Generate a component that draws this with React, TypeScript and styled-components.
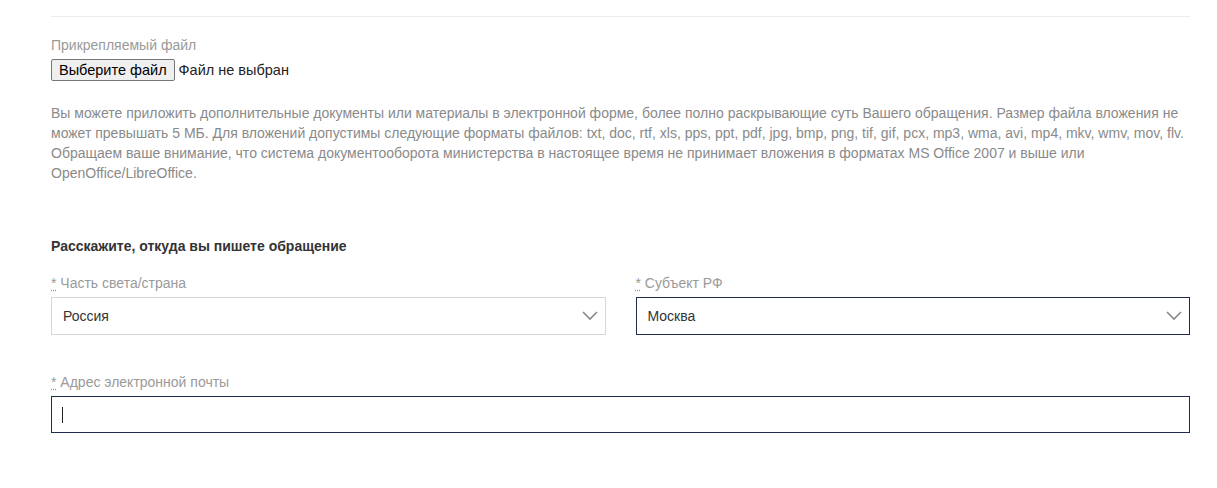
import styled, { createGlobalStyle } from 'styled-components';

const Global = createGlobalStyle`
  body { margin: 0; background: #fff; font-family: Arial, "Liberation Sans", sans-serif; }
`;

const Page = styled.div`
  padding: 0 27px 0 51px;
`;

const Rule = styled.div`
  border-top: 1px solid #ececec;
  margin-top: 16px;
`;

const Label = styled.div`
  color: #9a9a9a;
  font-size: 14px;
  line-height: 16px;
  margin-bottom: 6px;
  abbr { text-decoration: underline dotted; text-underline-offset: 2px; }
`;

const FileRow = styled.div`
  display: flex;
  align-items: center;
  gap: 4px;
  font-size: 14.5px;
  color: #222;
`;

const FileButton = styled.button`
  font-family: inherit;
  font-size: 14.5px;
  color: #000;
  background: #efefef;
  border: 1px solid #767676;
  border-radius: 2px;
  height: 22px;
  padding: 0 7px;
`;

const Hint = styled.p`
  margin: 22px 0 0;
  color: #8a8a8a;
  font-size: 14px;
  line-height: 20px;
`;

const Heading = styled.h3`
  margin: 55px 0 21px;
  font-size: 14px;
  font-weight: bold;
  color: #333;
`;

const Grid = styled.div`
  display: grid;
  grid-template-columns: 1fr 1fr;
  column-gap: 30px;
`;

const Field = styled.div<{ $mb?: number }>`
  margin-bottom: ${p => p.$mb ?? 0}px;
`;

const SelectBox = styled.div<{ $focus?: boolean }>`
  height: 38px;
  box-sizing: border-box;
  border: 1px solid ${p => (p.$focus ? '#1f2d4d' : '#d6d6d6')};
  display: flex;
  align-items: center;
  justify-content: space-between;
  padding: 0 4px 0 11px;
  font-size: 14px;
  color: #333;
`;

const Input = styled.div`
  height: 37px;
  box-sizing: border-box;
  border: 1px solid #1f2d4d;
  display: flex;
  align-items: center;
  padding-left: 10px;
`;

const Caret = styled.span`
  width: 1px;
  height: 16px;
  background: #222;
`;

const Chevron = () => (
  <svg width="22" height="22" viewBox="0 0 22 22" fill="none">
    <path d="M4 7l7 7 7-7" stroke="#8a8a8a" strokeWidth="1.6" />
  </svg>
);

const Req = ({ text }: { text: string }) => (
  <Label><abbr>*</abbr> {text}</Label>
);

export default function App() {
  return (
    <>
      <Global />
      <Page>
        <Rule />
        <div style={{ height: 20 }} />
        <Label>Прикрепляемый файл</Label>
        <FileRow>
          <FileButton>Выберите файл</FileButton>
          <span>Файл не выбран</span>
        </FileRow>
        <Hint>
          Вы можете приложить дополнительные документы или материалы в электронной форме, более полно раскрывающие суть Вашего обращения. Размер файла вложения не может превышать 5 МБ. Для вложений допустимы следующие форматы файлов: txt, doc, rtf, xls, pps, ppt, pdf, jpg, bmp, png, tif, gif, pcx, mp3, wma, avi, mp4, mkv, wmv, mov, flv. Обращаем ваше внимание, что система документооборота министерства в настоящее время не принимает вложения в форматах MS Office 2007 и выше или OpenOffice/LibreOffice.
        </Hint>
        <Heading>Расскажите, откуда вы пишете обращение</Heading>
        <Grid>
          <Field $mb={39}>
            <Req text="Часть света/страна" />
            <SelectBox>Россия<Chevron /></SelectBox>
          </Field>
          <Field $mb={39}>
            <Req text="Субъект РФ" />
            <SelectBox $focus>Москва<Chevron /></SelectBox>
          </Field>
        </Grid>
        <Field>
          <Req text="Адрес электронной почты" />
          <Input><Caret /></Input>
        </Field>
      </Page>
    </>
  );
}
